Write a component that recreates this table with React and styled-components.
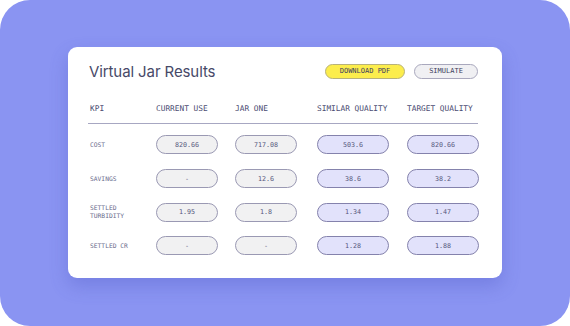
import styled, { createGlobalStyle } from "styled-components";

const GlobalStyle = createGlobalStyle`
  body {
    margin: 0;
    background: #ffffff;
  }
`;

const Frame = styled.div`
  width: 570px;
  height: 326px;
  box-sizing: border-box;
  padding-top: 47px;
  border-radius: 30px;
  background: #8a94f2;
  display: flex;
  justify-content: center;
  align-items: flex-start;
`;

const Card = styled.div`
  width: 434px;
  height: 231px;
  box-sizing: border-box;
  padding: 17px 24px 0 20px;
  background: #ffffff;
  border-radius: 9px;
  box-shadow: 0 8px 18px rgba(70, 78, 190, 0.3);
`;

const Header = styled.div`
  display: flex;
  align-items: center;
  height: 15px;
  padding-left: 1px;
`;

const Title = styled.h1`
  margin: 0;
  flex: 1;
  font-family: Inter, "Noto Sans", sans-serif;
  font-weight: 400;
  font-size: 15px;
  letter-spacing: -0.1px;
  color: #474968;
`;

const Actions = styled.div`
  display: flex;
  gap: 9px;
`;

const Button = styled.button`
  height: 15px;
  width: ${(p) => p.$width}px;
  padding: 0;
  border-radius: 8px;
  border: 1px solid ${(p) => (p.$primary ? "#b8b27a" : "#a9a8bd")};
  background: ${(p) => (p.$primary ? "#fced4c" : "#f0f0f3")};
  font-family: "DejaVu Sans Mono", monospace;
  font-size: 7px;
  color: #3e3f60;
  line-height: 1;
`;

const Table = styled.div`
  margin-top: 23px;
`;

const Grid = styled.div`
  display: grid;
  grid-template-columns: 68px 79px 82px 90px 72px;
  align-items: center;
  height: ${(p) => p.$height}px;
`;

const HeadRow = styled(Grid)`
  border-bottom: 1px solid #a7a7c2;
  box-sizing: border-box;
  padding-bottom: 8px;
`;

const HeadCell = styled.div`
  font-family: "DejaVu Sans Mono", monospace;
  font-size: 7.8px;
  color: #4b4c72;
  white-space: nowrap;
  padding-left: ${(p) => (p.$first ? 2 : 0)}px;
`;

const Rows = styled.div`
  padding-top: 4px;
`;

const Label = styled.div`
  font-family: "DejaVu Sans Mono", monospace;
  font-size: 6.3px;
  line-height: 1.25;
  color: #6a6b8c;
  padding-left: 2px;
  white-space: pre-line;
`;

const Pill = styled.div`
  box-sizing: border-box;
  width: ${(p) => (p.$wide ? 72 : 62)}px;
  height: 19px;
  border-radius: 10px;
  border: 1px solid ${(p) => (p.$accent ? "#8482ac" : "#9a99b3")};
  background: ${(p) => (p.$accent ? "#e2e2fb" : "#f1f1f2")};
  display: flex;
  align-items: center;
  justify-content: center;
  font-family: "DejaVu Sans Mono", monospace;
  font-size: 6.7px;
  color: #55567c;
`;

const rows = [
  { label: "COST", values: ["820.66", "717.08", "503.6", "820.66"] },
  { label: "SAVINGS", values: ["-", "12.6", "38.6", "38.2"] },
  { label: "SETTLED\nTURBIDITY", values: ["1.95", "1.8", "1.34", "1.47"] },
  { label: "SETTLED CR", values: ["-", "-", "1.28", "1.88"] },
];

const columns = ["KPI", "CURRENT USE", "JAR ONE", "SIMILAR QUALITY", "TARGET QUALITY"];

export default function App() {
  return (
    <>
      <GlobalStyle />
      <Frame>
        <Card>
          <Header>
            <Title>Virtual Jar Results</Title>
            <Actions>
              <Button $primary $width={80}>
                DOWNLOAD PDF
              </Button>
              <Button $width={64}>SIMULATE</Button>
            </Actions>
          </Header>
          <Table>
            <HeadRow $height={22}>
              {columns.map((c, i) => (
                <HeadCell key={c} $first={i === 0}>
                  {c}
                </HeadCell>
              ))}
            </HeadRow>
            <Rows>
              {rows.map((r) => (
                <Grid key={r.label} $height={33.7}>
                  <Label>{r.label}</Label>
                  {r.values.map((v, i) => (
                    <Pill key={i} $accent={i >= 2} $wide={i >= 2}>
                      {v}
                    </Pill>
                  ))}
                </Grid>
              ))}
            </Rows>
          </Table>
        </Card>
      </Frame>
    </>
  );
}
